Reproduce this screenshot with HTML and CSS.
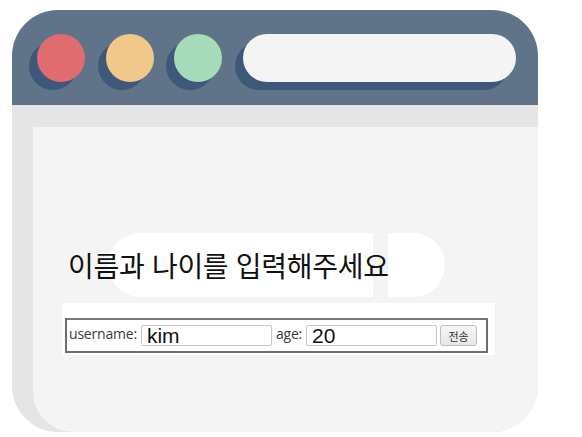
FILE: index.html
```html
<!DOCTYPE html>
<html lang="ko">
<head>
<meta charset="utf-8">
<title>이름과 나이</title>
<link rel="stylesheet" href="styles.css">
</head>
<body>
<div class="window">
  <div class="titlebar">
    <span class="dot dot-red"></span>
    <span class="dot dot-yellow"></span>
    <span class="dot dot-green"></span>
    <span class="address"></span>
  </div>
  <div class="frame">
    <div class="panel">
      <div class="heading-row">
        <h1 class="heading">이름과 나이를 입력해주세요</h1>
      </div>
      <div class="form-card">
        <form class="form">
          <fieldset class="fieldset">
            <label class="label" for="username">username:</label>
            <input class="field" id="username" type="text" value="kim">
            <label class="label" for="age">age:</label>
            <input class="field" id="age" type="text" value="20">
            <button class="submit" type="button">전송</button>
          </fieldset>
        </form>
      </div>
    </div>
  </div>
</div>
</body>
</html>
```
FILE: styles.css
```css
html, body {
  margin: 0;
  padding: 0;
  background: #ffffff;
}

body {
  padding: 10px 0 0 12px;
  font-family: "Noto Sans CJK KR", "Noto Sans", sans-serif;
}

.window {
  width: 526px;
  height: 422px;
  border-radius: 46px;
  overflow: hidden;
  background: #e5e5e5;
  display: flex;
  flex-direction: column;
}

.titlebar {
  height: 95px;
  flex: none;
  background: #5f7489;
  display: flex;
  align-items: center;
  padding: 0 0 0 25px;
  gap: 20px;
  box-sizing: border-box;
}

.dot {
  width: 48px;
  height: 48px;
  border-radius: 50%;
  flex: none;
  box-shadow: -8px 8px 0 #3e5879;
}

.dot-red { background: #e06c70; }
.dot-yellow { background: #f0c88a; margin-left: 1px; }
.dot-green { background: #a8dbbc; }

.address {
  width: 273px;
  height: 48px;
  border-radius: 24px;
  background: #f4f4f4;
  box-shadow: -8px 8px 0 #3e5879;
  margin-left: 1px;
  flex: none;
}

.frame {
  flex: 1;
  padding: 22px 0 0 21px;
  display: flex;
}

.panel {
  flex: 1;
  background: #f4f4f4;
  border-bottom-left-radius: 40px;
  padding: 106px 0 0 29px;
  display: flex;
  flex-direction: column;
  align-items: flex-start;
}

.heading-row {
  position: relative;
  height: 64px;
  width: 412px;
  display: flex;
  align-items: center;
  padding-left: 6px;
  box-sizing: border-box;
}

.heading-row::before {
  content: "";
  position: absolute;
  left: 46px;
  top: 0;
  width: 337px;
  height: 64px;
  border-radius: 32px;
  background: linear-gradient(to right, #ffffff 0, #ffffff 265px, #f4f4f4 265px, #f4f4f4 280px, #ffffff 280px);
}

.heading {
  position: relative;
  margin: 0;
  font-size: 28px;
  font-weight: 400;
  color: #111111;
  letter-spacing: -0.3px;
  line-height: 1;
}

.form-card {
  margin-top: 6px;
  width: 433px;
  height: 52px;
  background: #ffffff;
  box-sizing: border-box;
  padding: 15px 7px 2px 3px;
}

.form {
  margin: 0;
  height: 100%;
}

.fieldset {
  margin: 0;
  height: 100%;
  box-sizing: border-box;
  border: 2px solid #6e6e6e;
  border-top-color: #777777;
  padding: 0 0 0 2px;
  display: flex;
  align-items: center;
  gap: 4px;
  font-family: "Open Sans", "Noto Sans", sans-serif;
}

.label {
  font-size: 14px;
  color: #3a3a3a;
  margin-top: -5px;
  letter-spacing: -0.2px;
}

.field {
  width: 131px;
  height: 21px;
  box-sizing: border-box;
  border: 1px solid #c6c6c6;
  border-radius: 2px;
  padding: 1px 0 0 5px;
  font-family: "Liberation Sans", Arial, sans-serif;
  font-size: 21px;
  color: #111111;
  background: #ffffff;
  line-height: 19px;
}

.submit {
  width: 37px;
  height: 21px;
  margin-left: -1px;
  padding: 0;
  border: 1px solid #bdbdbd;
  border-radius: 3px;
  background: linear-gradient(#f6f6f6, #e6e6e6);
  font-family: "Noto Sans CJK KR", sans-serif;
  font-size: 11px;
  color: #333333;
}
```
